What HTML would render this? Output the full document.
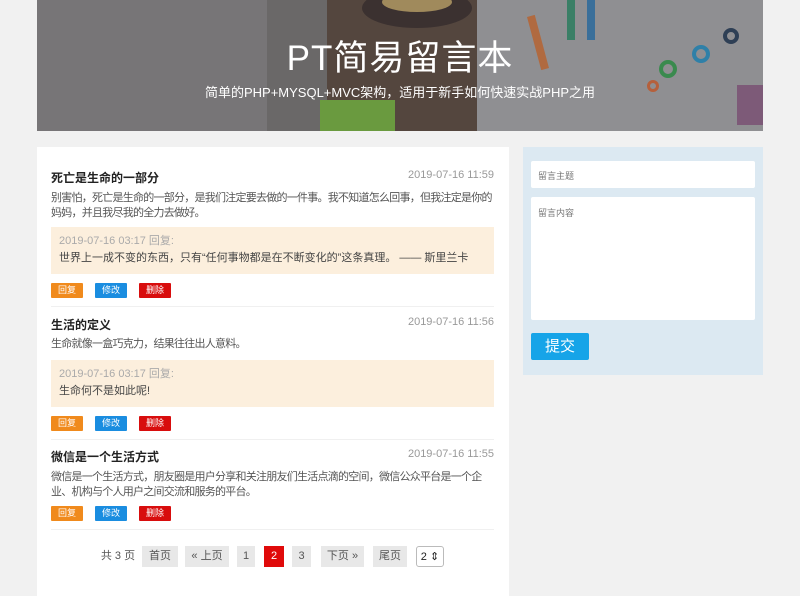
<!DOCTYPE html>
<html><head><meta charset="utf-8"><style>
*{margin:0;padding:0;box-sizing:border-box}
body{width:800px;height:596px;overflow:hidden;background:#f1f1f1;font-family:"Liberation Sans","Noto Sans CJK SC",sans-serif;position:relative}
.hd{position:absolute;left:37px;top:0;width:726px;height:131px;overflow:hidden;background:#6e6c6d}
.hd .s{position:absolute}
.hd h1{position:absolute;top:30px;left:0;width:100%;text-align:center;color:#fff;font-weight:normal;font-size:35px;letter-spacing:1px}
.hd p{position:absolute;top:82px;left:0;width:100%;text-align:center;color:#fff;font-size:13px}
.card{position:absolute;left:37px;top:147px;width:472px;height:449px;background:#fff}
.it{position:absolute;left:14px;width:443px}
.t{position:absolute;left:0;font-size:12px;color:#222;font-weight:bold}
.d{position:absolute;right:0;font-size:11px;color:#999}
.b{position:absolute;left:0;font-size:11px;color:#555;line-height:15px;width:460px;white-space:nowrap;letter-spacing:-0.75px}
.r{position:absolute;left:0;width:443px;background:#fcefdd;padding:6px 8px;font-size:11px;line-height:17px}
.r .x{color:#aaa}.r .y{color:#444}
.btns span{position:absolute;width:32px;height:15px;color:#fff;font-size:9px;text-align:center;line-height:15px;border-radius:1px}
.sep{position:absolute;left:0;width:443px;height:1px;background:#f0f0f0}
.pg{position:absolute;top:546px;font-size:11px;color:#555;height:21px;line-height:21px;text-align:center;background:#e8e8e8}
.side{position:absolute;left:523px;top:147px;width:240px;height:228px;background:#dce9f2}
</style></head><body>
<div class="hd">
<div class="s" style="left:0;top:0;width:230px;height:131px;background:#777577"></div>
<div class="s" style="left:230px;top:0;width:60px;height:131px;background:#6a6868"></div>
<div class="s" style="left:290px;top:0;width:150px;height:131px;background:#54463e"></div>
<div class="s" style="left:325px;top:-12px;width:110px;height:40px;border-radius:50%;background:#3b3130"></div>
<div class="s" style="left:345px;top:-8px;width:70px;height:20px;border-radius:50%;background:#a08a5c"></div>
<div class="s" style="left:283px;top:100px;width:75px;height:31px;background:#6a9a3f"></div>
<div class="s" style="left:443px;top:0;width:40px;height:20px;background:#6a9a3f"></div>
<div class="s" style="left:440px;top:0;width:286px;height:131px;background:#8f8f92"></div>
<div class="s" style="left:497px;top:15px;width:8px;height:55px;background:#b06a40;transform:rotate(-15deg)"></div>
<div class="s" style="left:530px;top:0;width:8px;height:40px;background:#3a7f66"></div>
<div class="s" style="left:550px;top:0;width:8px;height:40px;background:#3a6f9a"></div>
<div class="s" style="left:622px;top:60px;width:18px;height:18px;border-radius:50%;border:4px solid #3a8a4e"></div>
<div class="s" style="left:655px;top:45px;width:18px;height:18px;border-radius:50%;border:4px solid #2f80a8"></div>
<div class="s" style="left:686px;top:28px;width:16px;height:16px;border-radius:50%;border:4px solid #2e3f55"></div>
<div class="s" style="left:610px;top:80px;width:12px;height:12px;border-radius:50%;border:3px solid #b5603c"></div>
<div class="s" style="left:700px;top:85px;width:26px;height:40px;background:#7d5a78"></div>
<h1>PT简易留言本</h1>
<p>简单的PHP+MYSQL+MVC架构，适用于新手如何快速实战PHP之用</p>
</div>

<div class="card">
<div class="it" style="top:0">
<div class="t" style="top:22px">死亡是生命的一部分</div><div class="d" style="top:22px">2019-07-16 11:59</div>
<div class="b" style="top:44px">别害怕，死亡是生命的一部分，是我们注定要去做的一件事。我不知道怎么回事，但我注定是你的<br>妈妈，并且我尽我的全力去做好。</div>
<div class="r" style="top:80px;height:47px"><div class="x">2019-07-16 03:17 回复:</div><div class="y">世界上一成不变的东西，只有“任何事物都是在不断变化的”这条真理。 —— 斯里兰卡</div></div>
<div class="btns"><span style="left:0;top:136px;background:#f08a1c">回复</span><span style="left:44px;top:136px;background:#1a8de0">修改</span><span style="left:88px;top:136px;background:#d80d0d">删除</span></div>
<div class="sep" style="top:159px"></div>
</div>
<div class="it" style="top:147px">
<div class="t" style="top:22px">生活的定义</div><div class="d" style="top:22px">2019-07-16 11:56</div>
<div class="b" style="top:43px">生命就像一盒巧克力，结果往往出人意料。</div>
<div class="r" style="top:66px;height:47px"><div class="x">2019-07-16 03:17 回复:</div><div class="y">生命何不是如此呢!</div></div>
<div class="btns"><span style="left:0;top:122px;background:#f08a1c">回复</span><span style="left:44px;top:122px;background:#1a8de0">修改</span><span style="left:88px;top:122px;background:#d80d0d">删除</span></div>
<div class="sep" style="top:145px"></div>
</div>
<div class="it" style="top:280px">
<div class="t" style="top:21px">微信是一个生活方式</div><div class="d" style="top:21px">2019-07-16 11:55</div>
<div class="b" style="top:43px">微信是一个生活方式，朋友圈是用户分享和关注朋友们生活点滴的空间，微信公众平台是一个企<br>业、机构与个人用户之间交流和服务的平台。</div>
<div class="btns"><span style="left:0;top:79px;background:#f08a1c">回复</span><span style="left:44px;top:79px;background:#1a8de0">修改</span><span style="left:88px;top:79px;background:#d80d0d">删除</span></div>
<div class="sep" style="top:102px"></div>
</div>
</div>
<div class="pg" style="left:100px;width:36px;background:none">共 3 页</div>
<div class="pg" style="left:142px;width:36px">首页</div>
<div class="pg" style="left:185px;width:44px">« 上页</div>
<div class="pg" style="left:237px;width:18px">1</div>
<div class="pg" style="left:264px;width:20px;background:#e00a0a;color:#fff">2</div>
<div class="pg" style="left:292px;width:19px">3</div>
<div class="pg" style="left:321px;width:43px">下页 »</div>
<div class="pg" style="left:373px;width:34px">尾页</div>
<div class="pg" style="left:416px;width:28px;background:#fff;border:1px solid #bbb;border-radius:3px;color:#222">2 ⇕</div>

<div class="side">
<div style="position:absolute;left:8px;top:14px;width:224px;height:27px;background:#fff;border-radius:2px;font-size:9px;color:#777;padding:8px 7px">留言主题</div>
<div style="position:absolute;left:8px;top:50px;width:224px;height:123px;background:#fff;border-radius:2px;font-size:9px;color:#777;padding:9px 7px">留言内容</div>
<div style="position:absolute;left:8px;top:186px;width:58px;height:27px;background:#16a4e8;border-radius:2px;color:#fff;font-size:15px;text-align:center;line-height:27px">提交</div>
</div>
</body></html>
